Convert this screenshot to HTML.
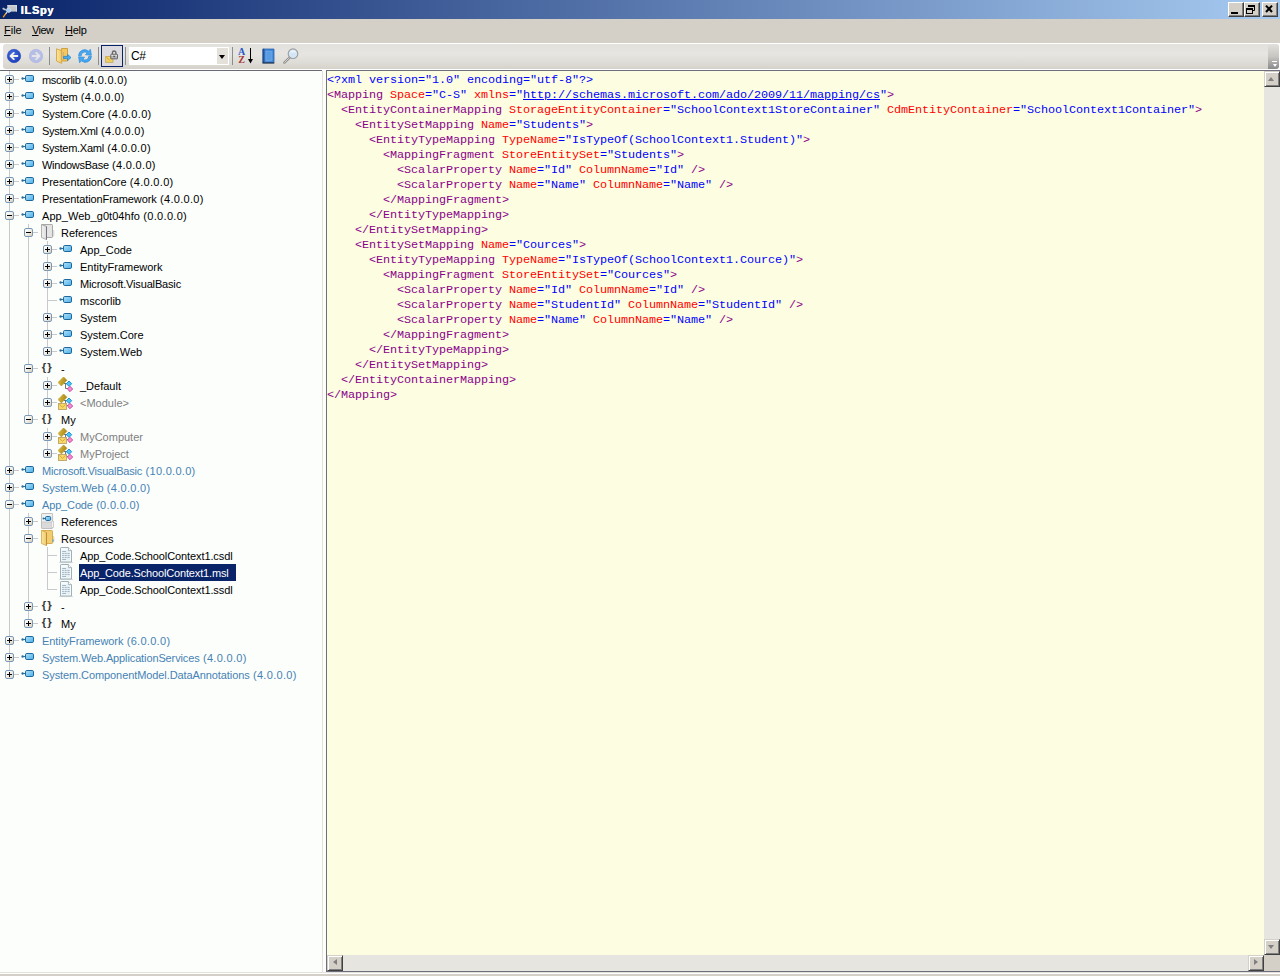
<!DOCTYPE html>
<html lang="en"><head><meta charset="utf-8"><title>ILSpy</title>
<style>
html,body{margin:0;padding:0;}
body{width:1280px;height:976px;overflow:hidden;background:#d4d0c8;position:relative;font-family:"Liberation Sans",sans-serif;font-size:11px;color:#000;}
#title{position:absolute;left:0;top:0;width:1280px;height:19px;background:linear-gradient(90deg,#0a246a 0%,#a6caf0 100%);}
#title .cap{position:absolute;left:20.5px;top:3px;color:#fff;font-weight:bold;font-size:11px;letter-spacing:0.7px;line-height:14px;text-shadow:0.45px 0 0 #fff;}
.wb{position:absolute;top:2px;width:16px;height:15px;background:#d4d0c8;box-sizing:border-box;border:1px solid;border-color:#fff #404040 #404040 #fff;box-shadow:inset -1px -1px 0 #808080;}
#menu{position:absolute;left:0;top:19px;width:1280px;height:24px;background:#d4d0c8;}
#menu span{position:absolute;top:4px;line-height:14px;font-size:11px;}
#menu u{text-decoration:underline;}
#tray{position:absolute;left:0;top:43px;width:1280px;height:27px;background:#fff;}
#tb{position:absolute;left:3px;top:1px;width:1276px;height:25px;border-radius:3px;background:linear-gradient(180deg,#e3e1dc 0%,#e7e5e1 40%,#dedcd6 75%,#d5d2cb 100%);}
#sepline{position:absolute;left:0;top:70px;width:322px;height:1px;background:#6a6a72;}
#sepgap{position:absolute;left:322px;top:70px;width:4px;height:1px;background:#fff;}
#tree{position:absolute;left:0;top:71px;width:322px;height:901px;background:#fcfefc;}
#split{position:absolute;left:322px;top:71px;width:4px;height:901px;background:#fcfefc;border-left:1px solid #e4e1dc;box-sizing:border-box;}
#code{position:absolute;left:326px;top:70px;width:954px;height:902px;background:#fcfde1;border-left:1px solid #6d6f7c;border-top:1px solid #6d6f7c;border-bottom:1px solid #6d6f7c;box-sizing:border-box;}
#bottom1{position:absolute;left:0;top:972px;width:1280px;height:1px;background:#e4e1dc;}
#bottom2{position:absolute;left:0;top:973px;width:1280px;height:1px;background:#fff;}
.exp{position:absolute;width:9px;height:9px;box-sizing:border-box;border:1px solid #7898b5;border-radius:2px;background:linear-gradient(135deg,#fff 0%,#f2efe8 50%,#d6cfbe 100%);}
.exp .h{position:absolute;left:1px;top:3px;width:5px;height:1px;background:#000;}
.exp .v{position:absolute;left:3px;top:1px;width:1px;height:5px;background:#000;}
.icw{position:absolute;width:16px;height:16px;}
.ic{display:block;}
.tx{position:absolute;height:17px;line-height:17px;font-size:11px;letter-spacing:0px;white-space:pre;}
.sfx{letter-spacing:0.3px;}
.tx.gray{color:#808080;}
.tx.blue{color:#4682b4;}
.tx.sel{background:#0a246a;color:#fff;}
.nsic{font-weight:bold;font-size:11px;line-height:16px;}
.ln{position:relative;height:15px;line-height:15px;white-space:pre;font-family:"Liberation Mono",monospace;font-size:11.8px;letter-spacing:-0.08px;}
.t{color:#8b008b;}
.a{color:#ff0000;}
.v{color:#0000ff;}
.l{text-decoration:underline;}
#codetext{position:absolute;left:0px;top:2px;}
.sbtn{position:absolute;width:16px;height:16px;background:#d4d0c8;box-sizing:border-box;border:1px solid;border-color:#d4d0c8 #404040 #404040 #d4d0c8;box-shadow:inset 1px 1px 0 #fff, inset -1px -1px 0 #808080;}
.track{position:absolute;background:#e7e5e0;}
.tl{position:absolute;background:#c9c9cd;display:block;}
.selbg{position:absolute;background:#0a246a;}
.tx.sel{background:none;color:#fff;}
.appic{position:absolute;left:2px;top:2px;width:16px;height:16px;}
.wb svg{display:block;}
.tbi{position:absolute;width:16px;height:16px;}
.tsep{position:absolute;top:3px;width:1px;height:18px;background:#8d8d8d;}
.tbtn{position:absolute;width:22px;height:22px;box-sizing:border-box;border:1px solid #0a246a;background:#dcdce0;}
.tbtn .tbi{left:2px;top:2px;}
.combo{position:absolute;left:126px;top:3px;width:100px;height:18px;background:#fff;}
.ctext{position:absolute;left:2px;top:2px;font-size:12px;letter-spacing:-0.3px;line-height:14px;}
.cbtn{position:absolute;left:88px;top:1px;width:11px;height:16px;background:#e4e1db;}
.cbtn i{position:absolute;left:2px;top:7px;width:0;height:0;border-left:3.5px solid transparent;border-right:3.5px solid transparent;border-top:4px solid #000;}
.grip{position:absolute;left:1265px;top:0;width:11px;height:25px;border-radius:0 3px 3px 0;background:linear-gradient(180deg,#e2e0db 0%,#c8c6c2 50%,#8a8a8a 100%);}
.grip .g1{position:absolute;left:4px;top:17px;width:5px;height:1px;background:#fff;}
.grip .g2{position:absolute;left:5px;top:20px;width:0;height:0;border-left:2.5px solid transparent;border-right:2.5px solid transparent;border-top:3px solid #fff;}
.ar{position:absolute;width:0;height:0;}
.ar.up{left:3px;top:5px;border-left:3.5px solid transparent;border-right:3.5px solid transparent;border-bottom:4px solid #808080;}
.ar.down{left:3px;top:5px;border-left:3.5px solid transparent;border-right:3.5px solid transparent;border-top:4px solid #808080;}
.ar.left{left:5px;top:3px;border-top:3.5px solid transparent;border-bottom:3.5px solid transparent;border-right:4px solid #808080;}
.ar.right{left:5px;top:3px;border-top:3.5px solid transparent;border-bottom:3.5px solid transparent;border-left:4px solid #808080;}

</style></head>
<body>
<svg width="0" height="0" style="position:absolute">
<defs>
<linearGradient id="gAsm" x1="0" y1="0" x2="1" y2="1"><stop offset="0" stop-color="#b4e2fa"/><stop offset="0.5" stop-color="#7cc8f2"/><stop offset="1" stop-color="#4fb0e6"/></linearGradient>
<linearGradient id="gGold" x1="0" y1="0" x2="1" y2="1"><stop offset="0" stop-color="#d8b83a"/><stop offset="1" stop-color="#a8861a"/></linearGradient>
<linearGradient id="gFoldY" x1="0" y1="0" x2="1" y2="0"><stop offset="0" stop-color="#fae6a4"/><stop offset="1" stop-color="#f0c868"/></linearGradient>
<linearGradient id="gFoldG" x1="0" y1="0" x2="1" y2="0"><stop offset="0" stop-color="#f2f2f2"/><stop offset="1" stop-color="#dcdcdc"/></linearGradient>
<radialGradient id="gBack" cx="0.4" cy="0.35" r="0.7"><stop offset="0" stop-color="#4a6ee0"/><stop offset="1" stop-color="#1c3cb8"/></radialGradient>
<linearGradient id="gBook" x1="0" y1="0" x2="1" y2="0"><stop offset="0" stop-color="#2c66b8"/><stop offset="0.25" stop-color="#4a90dc"/><stop offset="1" stop-color="#3c82d2"/></linearGradient>
<linearGradient id="gRef" x1="0" y1="0" x2="1" y2="1"><stop offset="0" stop-color="#7cc4f4"/><stop offset="1" stop-color="#2a8ae0"/></linearGradient>
<linearGradient id="gExp" x1="0" y1="0" x2="1" y2="1"><stop offset="0" stop-color="#ffffff"/><stop offset="0.5" stop-color="#f4f1ea"/><stop offset="1" stop-color="#d2cab6"/></linearGradient>
</defs></svg>
<div id="title"><span class="appic"><svg class="ic" width="16" height="16" viewBox="0 0 16 16"><rect x="5.3" y="3.2" width="9.6" height="6.4" fill="#c2c6ca"/><rect x="5.3" y="3.2" width="9.6" height="1" fill="#e0e2e4"/><rect x="14" y="3.2" width="0.9" height="6.4" fill="#dcdee0"/><path d="M0.6 6.2 L3.8 8" stroke="#c4c8cc" stroke-width="1.6"/><circle cx="6.6" cy="8.2" r="2.2" fill="#a4d0f6" stroke="#d8e4f0" stroke-width="0.7"/><path d="M4.6 10.6 L3.6 11.8" stroke="#e8e8e8" stroke-width="1.3" stroke-linecap="round"/><path d="M3.6 11.9 L1.4 14.8" stroke="#f0a020" stroke-width="1.4" stroke-linecap="round"/></svg></span><span class="cap">ILSpy</span>
<div class="wb" style="left:1228px"><svg width="14" height="13" viewBox="0 0 14 13"><rect x="2" y="9" width="7" height="2" fill="#000"/></svg></div>
<div class="wb" style="left:1244px"><svg width="14" height="13" viewBox="0 0 14 13"><path d="M3.5 3 V2.5 H9.5 V7.5 H8" fill="none" stroke="#000" stroke-width="1"/><rect x="3" y="2" width="7" height="2" fill="#000"/><rect x="1.5" y="5.5" width="6" height="5" fill="none" stroke="#000"/><rect x="1" y="5" width="7" height="2" fill="#000"/></svg></div>
<div class="wb" style="left:1262px"><svg width="14" height="13" viewBox="0 0 14 13"><path d="M3 2.6 L9 9 M9 2.6 L3 9" stroke="#000" stroke-width="2.1" stroke-linecap="butt"/></svg></div>
</div>
<div id="menu"><span style="left:4px"><u>F</u>ile</span><span style="left:32px;letter-spacing:-0.6px"><u>V</u>iew</span><span style="left:65px;letter-spacing:-0.25px"><u>H</u>elp</span></div>
<div id="tray"><div id="tb">
<span class="tbi" style="left:3px;top:4px"><svg class="ic" width="16" height="16" viewBox="0 0 16 16"><circle cx="8" cy="8" r="6.7" fill="url(#gBack)" stroke="#2848c0" stroke-width="0.6"/><path d="M11.4 8 H5.2 M7.8 4.9 L4.6 8 L7.8 11.1" fill="none" stroke="#f4f4f0" stroke-width="1.9" stroke-linecap="round" stroke-linejoin="round"/></svg></span>
<span class="tbi" style="left:25px;top:4px"><svg class="ic" width="16" height="16" viewBox="0 0 16 16"><circle cx="8" cy="8" r="6.7" fill="#b6bee6" stroke="#aab2de" stroke-width="0.6"/><path d="M4.6 8 H10.8 M8.2 4.9 L11.4 8 L8.2 11.1" fill="none" stroke="#e6e6ea" stroke-width="1.9" stroke-linecap="round" stroke-linejoin="round"/></svg></span>
<i class="tsep" style="left:46px"></i>
<span class="tbi" style="left:53px;top:4px"><svg class="ic" width="16" height="16" viewBox="0 0 16 16"><path d="M5.5 0.5 H11.5 V13 H5.5 Z" fill="#f2c860" stroke="#d0a040"/><rect x="6.6" y="4" width="1.4" height="8" fill="#d4b278"/><path d="M0.5 0.8 L5.6 2.6 V15.4 L0.5 13 Z" fill="url(#gFoldY)" stroke="#d8aa4a" stroke-linejoin="round"/><path d="M7.6 8.4 H11.6 V6.4 L15 9.5 L11.6 12.6 V10.6 H7.6 Z" fill="#44aef2" stroke="#1c7cd0" stroke-width="0.7" stroke-linejoin="round"/></svg></span>
<span class="tbi" style="left:74px;top:4px"><svg class="ic" width="16" height="16" viewBox="0 0 16 16"><path d="M1.6 7.8 A6 6 0 0 1 11.6 3.2 L13.4 1.2 L14.4 7.2 L8.4 6.8 L10.1 4.9 A3.6 3.6 0 0 0 4.2 7.8 Z" fill="#46a8f0" stroke="#2484d8" stroke-width="0.6" stroke-linejoin="round"/><path d="M14.4 8.2 A6 6 0 0 1 4.4 12.8 L2.6 14.8 L1.6 8.8 L7.6 9.2 L5.9 11.1 A3.6 3.6 0 0 0 11.8 8.2 Z" fill="#46a8f0" stroke="#2484d8" stroke-width="0.6" stroke-linejoin="round"/></svg></span>
<i class="tsep" style="left:95px"></i>
<span class="tbtn" style="left:98px;top:1px"><span class="tbi" style="left:2px;top:2px"><svg class="ic" width="16" height="16" viewBox="0 0 16 16"><rect x="1.7" y="8.5" width="7.2" height="5.8" fill="#f2d264" stroke="#c8aa58" stroke-width="0.9"/><path d="M2.4 9.2 L5.3 12 L8.2 9.2" fill="none" stroke="#c8a444" stroke-width="0.9"/><path d="M8.4 6.4 V4.8 A1.75 1.75 0 0 1 11.9 4.8 V6.4" fill="none" stroke="#6a6a6a" stroke-width="1.4"/><rect x="6.8" y="6.3" width="6.7" height="4.6" rx="0.6" fill="#b4b4b4" stroke="#5e5e5e" stroke-width="0.9"/><rect x="7.4" y="6.9" width="5.5" height="1" fill="#e8e8e8"/><path d="M8.8 7.8 H11.5 L10.15 9.4 Z" fill="#4a4a4a"/></svg></span></span>
<i class="tsep" style="left:122px"></i>
<span class="combo"><span class="ctext">C#</span><span class="cbtn"><i></i></span></span>
<i class="tsep" style="left:229px"></i>
<span class="tbi" style="left:235px;top:4px"><svg class="ic" width="16" height="16" viewBox="0 0 16 16"><text x="0" y="7" font-family="Liberation Serif, serif" font-weight="bold" font-size="10" fill="#2458c8">A</text><text x="0.3" y="15.4" font-family="Liberation Serif, serif" font-weight="bold" font-size="10" fill="#a83838">Z</text><path d="M12.5 0 V13" stroke="#000" stroke-width="1"/><path d="M10 11 H15 L12.5 15.5 Z" fill="#000"/></svg></span>
<span class="tbi" style="left:258px;top:4px"><svg class="ic" width="16" height="16" viewBox="0 0 16 16"><path d="M2 1 H13 V14.5 H2 Z" fill="url(#gBook)" stroke="#2a62b4" stroke-width="0.8"/><rect x="1.5" y="0.8" width="1.8" height="14.2" fill="#24508c"/><rect x="5" y="3.5" width="6" height="9" fill="#5a9ce4" stroke="#78b0ec" stroke-width="0.6"/><path d="M1.5 15 H13.3" stroke="#1c2c48" stroke-width="1.2"/></svg></span>
<span class="tbi" style="left:280px;top:4px"><svg class="ic" width="16" height="16" viewBox="0 0 16 16"><path d="M7.4 8.8 L1.4 14.6" stroke="#8c8c8c" stroke-width="2.4" stroke-linecap="round"/><path d="M7.4 8.8 L1.6 14.4" stroke="#d8d8d8" stroke-width="1" stroke-linecap="round"/><circle cx="10" cy="5.7" r="4.8" fill="#d4e6f6" stroke="#9c9c9c" stroke-width="1.1"/><path d="M6.6 4.4 A3.8 3.8 0 0 1 13.4 4.4 Z" fill="#eaf3fb"/></svg></span>
<span class="grip"><i class="g1"></i><i class="g2"></i></span>
</div></div>
<div id="sepline"></div><div id="sepgap"></div>
<div id="tree"></div>
<div id="split"></div>
<i class="tl" style="left:9px;top:71px;width:1px;height:604px"></i>
<i class="tl" style="left:28px;top:224px;width:1px;height:196px"></i>
<i class="tl" style="left:47px;top:241px;width:1px;height:111px"></i>
<i class="tl" style="left:47px;top:377px;width:1px;height:26px"></i>
<i class="tl" style="left:47px;top:428px;width:1px;height:26px"></i>
<i class="tl" style="left:28px;top:513px;width:1px;height:111px"></i>
<i class="tl" style="left:47px;top:547px;width:1px;height:43px"></i>
<i class="tl" style="left:14px;top:79px;width:5px;height:1px"></i>
<i class="tl" style="left:14px;top:96px;width:5px;height:1px"></i>
<i class="tl" style="left:14px;top:113px;width:5px;height:1px"></i>
<i class="tl" style="left:14px;top:130px;width:5px;height:1px"></i>
<i class="tl" style="left:14px;top:147px;width:5px;height:1px"></i>
<i class="tl" style="left:14px;top:164px;width:5px;height:1px"></i>
<i class="tl" style="left:14px;top:181px;width:5px;height:1px"></i>
<i class="tl" style="left:14px;top:198px;width:5px;height:1px"></i>
<i class="tl" style="left:14px;top:215px;width:5px;height:1px"></i>
<i class="tl" style="left:33px;top:232px;width:5px;height:1px"></i>
<i class="tl" style="left:52px;top:249px;width:5px;height:1px"></i>
<i class="tl" style="left:52px;top:266px;width:5px;height:1px"></i>
<i class="tl" style="left:52px;top:283px;width:5px;height:1px"></i>
<i class="tl" style="left:48px;top:300px;width:9px;height:1px"></i>
<i class="tl" style="left:52px;top:317px;width:5px;height:1px"></i>
<i class="tl" style="left:52px;top:334px;width:5px;height:1px"></i>
<i class="tl" style="left:52px;top:351px;width:5px;height:1px"></i>
<i class="tl" style="left:33px;top:368px;width:5px;height:1px"></i>
<i class="tl" style="left:52px;top:385px;width:5px;height:1px"></i>
<i class="tl" style="left:52px;top:402px;width:5px;height:1px"></i>
<i class="tl" style="left:33px;top:419px;width:5px;height:1px"></i>
<i class="tl" style="left:52px;top:436px;width:5px;height:1px"></i>
<i class="tl" style="left:52px;top:453px;width:5px;height:1px"></i>
<i class="tl" style="left:14px;top:470px;width:5px;height:1px"></i>
<i class="tl" style="left:14px;top:487px;width:5px;height:1px"></i>
<i class="tl" style="left:14px;top:504px;width:5px;height:1px"></i>
<i class="tl" style="left:33px;top:521px;width:5px;height:1px"></i>
<i class="tl" style="left:33px;top:538px;width:5px;height:1px"></i>
<i class="tl" style="left:48px;top:555px;width:9px;height:1px"></i>
<i class="tl" style="left:48px;top:572px;width:9px;height:1px"></i>
<i class="tl" style="left:48px;top:589px;width:9px;height:1px"></i>
<i class="tl" style="left:33px;top:606px;width:5px;height:1px"></i>
<i class="tl" style="left:33px;top:623px;width:5px;height:1px"></i>
<i class="tl" style="left:14px;top:640px;width:5px;height:1px"></i>
<i class="tl" style="left:14px;top:657px;width:5px;height:1px"></i>
<i class="tl" style="left:14px;top:674px;width:5px;height:1px"></i>
<span class="exp" style="left:5px;top:75px"><i class="h"></i><i class="v"></i></span><span class="icw" style="left:21px;top:72px"><svg class="ic" width="16" height="16" viewBox="0 0 16 16"><circle cx="1.6" cy="6.5" r="1.2" fill="#2b6f9e"/><rect x="2" y="6" width="3" height="1" fill="#2b6f9e"/><rect x="4.5" y="3.5" width="8" height="6" rx="1.3" fill="url(#gAsm)" stroke="#1d679a"/></svg></span><span class="tx " style="left:42px;top:72px;letter-spacing:-0.3px">mscorlib<span class="sfx"> (4.0.0.0)</span></span>
<span class="exp" style="left:5px;top:92px"><i class="h"></i><i class="v"></i></span><span class="icw" style="left:21px;top:89px"><svg class="ic" width="16" height="16" viewBox="0 0 16 16"><circle cx="1.6" cy="6.5" r="1.2" fill="#2b6f9e"/><rect x="2" y="6" width="3" height="1" fill="#2b6f9e"/><rect x="4.5" y="3.5" width="8" height="6" rx="1.3" fill="url(#gAsm)" stroke="#1d679a"/></svg></span><span class="tx " style="left:42px;top:89px;letter-spacing:-0.2px">System<span class="sfx"> (4.0.0.0)</span></span>
<span class="exp" style="left:5px;top:109px"><i class="h"></i><i class="v"></i></span><span class="icw" style="left:21px;top:106px"><svg class="ic" width="16" height="16" viewBox="0 0 16 16"><circle cx="1.6" cy="6.5" r="1.2" fill="#2b6f9e"/><rect x="2" y="6" width="3" height="1" fill="#2b6f9e"/><rect x="4.5" y="3.5" width="8" height="6" rx="1.3" fill="url(#gAsm)" stroke="#1d679a"/></svg></span><span class="tx " style="left:42px;top:106px;letter-spacing:-0.1px">System.Core<span class="sfx"> (4.0.0.0)</span></span>
<span class="exp" style="left:5px;top:126px"><i class="h"></i><i class="v"></i></span><span class="icw" style="left:21px;top:123px"><svg class="ic" width="16" height="16" viewBox="0 0 16 16"><circle cx="1.6" cy="6.5" r="1.2" fill="#2b6f9e"/><rect x="2" y="6" width="3" height="1" fill="#2b6f9e"/><rect x="4.5" y="3.5" width="8" height="6" rx="1.3" fill="url(#gAsm)" stroke="#1d679a"/></svg></span><span class="tx " style="left:42px;top:123px;letter-spacing:-0.3px">System.Xml<span class="sfx"> (4.0.0.0)</span></span>
<span class="exp" style="left:5px;top:143px"><i class="h"></i><i class="v"></i></span><span class="icw" style="left:21px;top:140px"><svg class="ic" width="16" height="16" viewBox="0 0 16 16"><circle cx="1.6" cy="6.5" r="1.2" fill="#2b6f9e"/><rect x="2" y="6" width="3" height="1" fill="#2b6f9e"/><rect x="4.5" y="3.5" width="8" height="6" rx="1.3" fill="url(#gAsm)" stroke="#1d679a"/></svg></span><span class="tx " style="left:42px;top:140px;letter-spacing:-0.27px">System.Xaml<span class="sfx"> (4.0.0.0)</span></span>
<span class="exp" style="left:5px;top:160px"><i class="h"></i><i class="v"></i></span><span class="icw" style="left:21px;top:157px"><svg class="ic" width="16" height="16" viewBox="0 0 16 16"><circle cx="1.6" cy="6.5" r="1.2" fill="#2b6f9e"/><rect x="2" y="6" width="3" height="1" fill="#2b6f9e"/><rect x="4.5" y="3.5" width="8" height="6" rx="1.3" fill="url(#gAsm)" stroke="#1d679a"/></svg></span><span class="tx " style="left:42px;top:157px;letter-spacing:-0.27px">WindowsBase<span class="sfx"> (4.0.0.0)</span></span>
<span class="exp" style="left:5px;top:177px"><i class="h"></i><i class="v"></i></span><span class="icw" style="left:21px;top:174px"><svg class="ic" width="16" height="16" viewBox="0 0 16 16"><circle cx="1.6" cy="6.5" r="1.2" fill="#2b6f9e"/><rect x="2" y="6" width="3" height="1" fill="#2b6f9e"/><rect x="4.5" y="3.5" width="8" height="6" rx="1.3" fill="url(#gAsm)" stroke="#1d679a"/></svg></span><span class="tx " style="left:42px;top:174px;letter-spacing:-0.07px">PresentationCore<span class="sfx"> (4.0.0.0)</span></span>
<span class="exp" style="left:5px;top:194px"><i class="h"></i><i class="v"></i></span><span class="icw" style="left:21px;top:191px"><svg class="ic" width="16" height="16" viewBox="0 0 16 16"><circle cx="1.6" cy="6.5" r="1.2" fill="#2b6f9e"/><rect x="2" y="6" width="3" height="1" fill="#2b6f9e"/><rect x="4.5" y="3.5" width="8" height="6" rx="1.3" fill="url(#gAsm)" stroke="#1d679a"/></svg></span><span class="tx " style="left:42px;top:191px;letter-spacing:-0.1px">PresentationFramework<span class="sfx"> (4.0.0.0)</span></span>
<span class="exp" style="left:5px;top:211px"><i class="h"></i></span><span class="icw" style="left:21px;top:208px"><svg class="ic" width="16" height="16" viewBox="0 0 16 16"><circle cx="1.6" cy="6.5" r="1.2" fill="#2b6f9e"/><rect x="2" y="6" width="3" height="1" fill="#2b6f9e"/><rect x="4.5" y="3.5" width="8" height="6" rx="1.3" fill="url(#gAsm)" stroke="#1d679a"/></svg></span><span class="tx " style="left:42px;top:208px;letter-spacing:0.06px">App_Web_g0t04hfo<span class="sfx"> (0.0.0.0)</span></span>
<span class="exp" style="left:24px;top:228px"><i class="h"></i></span><span class="icw" style="left:41px;top:224px"><svg class="ic" width="16" height="17" viewBox="0 0 16 17"><path d="M11 6.4 H12.2 Q12.8 6.4 12.8 7 V11.4 Q12.8 12 12.2 12 H11 Z" fill="#ffffff" stroke="#b4b4b4" stroke-width="0.6"/><path d="M1 0.5 H10.8 Q11.5 0.5 11.5 1.2 V12.8 Q11.5 13.5 10.8 13.5 H5 V2.4 L0.5 0.6 Z" fill="#e4e4e4" stroke="#a0a0a0" stroke-width="0.9" stroke-linejoin="round"/><path d="M0.5 0.6 L5.5 2.5 V15.6 L0.5 13.5 Z" fill="url(#gFoldG)" stroke="#a8a8a8" stroke-width="0.9" stroke-linejoin="round"/><path d="M5.5 2.5 V15.6" stroke="#74747c" stroke-width="1"/></svg></span><span class="tx " style="left:61px;top:225px">References</span>
<span class="exp" style="left:43px;top:245px"><i class="h"></i><i class="v"></i></span><span class="icw" style="left:59px;top:242px"><svg class="ic" width="16" height="16" viewBox="0 0 16 16"><circle cx="1.6" cy="6.5" r="1.2" fill="#2b6f9e"/><rect x="2" y="6" width="3" height="1" fill="#2b6f9e"/><rect x="4.5" y="3.5" width="8" height="6" rx="1.3" fill="url(#gAsm)" stroke="#1d679a"/></svg></span><span class="tx " style="left:80px;top:242px">App_Code</span>
<span class="exp" style="left:43px;top:262px"><i class="h"></i><i class="v"></i></span><span class="icw" style="left:59px;top:259px"><svg class="ic" width="16" height="16" viewBox="0 0 16 16"><circle cx="1.6" cy="6.5" r="1.2" fill="#2b6f9e"/><rect x="2" y="6" width="3" height="1" fill="#2b6f9e"/><rect x="4.5" y="3.5" width="8" height="6" rx="1.3" fill="url(#gAsm)" stroke="#1d679a"/></svg></span><span class="tx " style="left:80px;top:259px">EntityFramework</span>
<span class="exp" style="left:43px;top:279px"><i class="h"></i><i class="v"></i></span><span class="icw" style="left:59px;top:276px"><svg class="ic" width="16" height="16" viewBox="0 0 16 16"><circle cx="1.6" cy="6.5" r="1.2" fill="#2b6f9e"/><rect x="2" y="6" width="3" height="1" fill="#2b6f9e"/><rect x="4.5" y="3.5" width="8" height="6" rx="1.3" fill="url(#gAsm)" stroke="#1d679a"/></svg></span><span class="tx " style="left:80px;top:276px;letter-spacing:-0.16px">Microsoft.VisualBasic</span>
<span class="icw" style="left:59px;top:293px"><svg class="ic" width="16" height="16" viewBox="0 0 16 16"><circle cx="1.6" cy="6.5" r="1.2" fill="#2b6f9e"/><rect x="2" y="6" width="3" height="1" fill="#2b6f9e"/><rect x="4.5" y="3.5" width="8" height="6" rx="1.3" fill="url(#gAsm)" stroke="#1d679a"/></svg></span><span class="tx " style="left:80px;top:293px">mscorlib</span>
<span class="exp" style="left:43px;top:313px"><i class="h"></i><i class="v"></i></span><span class="icw" style="left:59px;top:310px"><svg class="ic" width="16" height="16" viewBox="0 0 16 16"><circle cx="1.6" cy="6.5" r="1.2" fill="#2b6f9e"/><rect x="2" y="6" width="3" height="1" fill="#2b6f9e"/><rect x="4.5" y="3.5" width="8" height="6" rx="1.3" fill="url(#gAsm)" stroke="#1d679a"/></svg></span><span class="tx " style="left:80px;top:310px">System</span>
<span class="exp" style="left:43px;top:330px"><i class="h"></i><i class="v"></i></span><span class="icw" style="left:59px;top:327px"><svg class="ic" width="16" height="16" viewBox="0 0 16 16"><circle cx="1.6" cy="6.5" r="1.2" fill="#2b6f9e"/><rect x="2" y="6" width="3" height="1" fill="#2b6f9e"/><rect x="4.5" y="3.5" width="8" height="6" rx="1.3" fill="url(#gAsm)" stroke="#1d679a"/></svg></span><span class="tx " style="left:80px;top:327px">System.Core</span>
<span class="exp" style="left:43px;top:347px"><i class="h"></i><i class="v"></i></span><span class="icw" style="left:59px;top:344px"><svg class="ic" width="16" height="16" viewBox="0 0 16 16"><circle cx="1.6" cy="6.5" r="1.2" fill="#2b6f9e"/><rect x="2" y="6" width="3" height="1" fill="#2b6f9e"/><rect x="4.5" y="3.5" width="8" height="6" rx="1.3" fill="url(#gAsm)" stroke="#1d679a"/></svg></span><span class="tx " style="left:80px;top:344px">System.Web</span>
<span class="exp" style="left:24px;top:364px"><i class="h"></i></span><span class="icw" style="left:41px;top:361px"><svg class="ic" width="16" height="16" viewBox="0 0 16 16"><text x="6.3" y="9.6" text-anchor="middle" font-family="Liberation Sans, sans-serif" font-weight="bold" font-size="11.5" fill="#3c3c3c" letter-spacing="1">{}</text></svg></span><span class="tx " style="left:61px;top:361px">-</span>
<span class="exp" style="left:43px;top:381px"><i class="h"></i><i class="v"></i></span><span class="icw" style="left:58px;top:377px"><svg class="ic" width="16" height="17" viewBox="0 0 16 17"><path d="M6 6.5 H9 M7.5 6.5 V11.5 H10" fill="none" stroke="#747474" stroke-width="1"/><rect x="-4" y="-2.4" width="8" height="4.8" transform="translate(4.5 4.4) rotate(-45)" fill="url(#gGold)" stroke="#b09420" stroke-width="0.5"/><rect x="-1.9" y="-1.9" width="3.8" height="3.8" transform="translate(11 6.7) rotate(45)" fill="#4cc4f6" stroke="#1a8ed0" stroke-width="0.9"/><rect x="-1.9" y="-1.9" width="3.8" height="3.8" transform="translate(12 12) rotate(45)" fill="#f68cd0" stroke="#c644a0" stroke-width="0.9"/></svg></span><span class="tx " style="left:80px;top:378px">_Default</span>
<span class="exp" style="left:43px;top:398px"><i class="h"></i><i class="v"></i></span><span class="icw" style="left:58px;top:394px"><svg class="ic" width="16" height="17" viewBox="0 0 16 17"><path d="M6 6.5 H9 M7.5 6.5 V11.5 H10" fill="none" stroke="#747474" stroke-width="1"/><rect x="-4" y="-2.4" width="8" height="4.8" transform="translate(4.5 4.4) rotate(-45)" fill="url(#gGold)" stroke="#b09420" stroke-width="0.5"/><rect x="-1.9" y="-1.9" width="3.8" height="3.8" transform="translate(11 6.7) rotate(45)" fill="#4cc4f6" stroke="#1a8ed0" stroke-width="0.9"/><rect x="-1.9" y="-1.9" width="3.8" height="3.8" transform="translate(12 12) rotate(45)" fill="#f68cd0" stroke="#c644a0" stroke-width="0.9"/><rect x="0.5" y="9.5" width="8" height="6" fill="#f8d866" stroke="#bca468" stroke-width="0.9"/><path d="M1.4 10.3 L4.5 13.3 L7.6 10.3" fill="none" stroke="#d4a838" stroke-width="1"/></svg></span><span class="tx gray" style="left:80px;top:395px">&lt;Module&gt;</span>
<span class="exp" style="left:24px;top:415px"><i class="h"></i></span><span class="icw" style="left:41px;top:412px"><svg class="ic" width="16" height="16" viewBox="0 0 16 16"><text x="6.3" y="9.6" text-anchor="middle" font-family="Liberation Sans, sans-serif" font-weight="bold" font-size="11.5" fill="#3c3c3c" letter-spacing="1">{}</text></svg></span><span class="tx " style="left:61px;top:412px">My</span>
<span class="exp" style="left:43px;top:432px"><i class="h"></i><i class="v"></i></span><span class="icw" style="left:58px;top:428px"><svg class="ic" width="16" height="17" viewBox="0 0 16 17"><path d="M6 6.5 H9 M7.5 6.5 V11.5 H10" fill="none" stroke="#747474" stroke-width="1"/><rect x="-4" y="-2.4" width="8" height="4.8" transform="translate(4.5 4.4) rotate(-45)" fill="url(#gGold)" stroke="#b09420" stroke-width="0.5"/><rect x="-1.9" y="-1.9" width="3.8" height="3.8" transform="translate(11 6.7) rotate(45)" fill="#4cc4f6" stroke="#1a8ed0" stroke-width="0.9"/><rect x="-1.9" y="-1.9" width="3.8" height="3.8" transform="translate(12 12) rotate(45)" fill="#f68cd0" stroke="#c644a0" stroke-width="0.9"/><rect x="0.5" y="9.5" width="8" height="6" fill="#f8d866" stroke="#bca468" stroke-width="0.9"/><path d="M1.4 10.3 L4.5 13.3 L7.6 10.3" fill="none" stroke="#d4a838" stroke-width="1"/></svg></span><span class="tx gray" style="left:80px;top:429px">MyComputer</span>
<span class="exp" style="left:43px;top:449px"><i class="h"></i><i class="v"></i></span><span class="icw" style="left:58px;top:445px"><svg class="ic" width="16" height="17" viewBox="0 0 16 17"><path d="M6 6.5 H9 M7.5 6.5 V11.5 H10" fill="none" stroke="#747474" stroke-width="1"/><rect x="-4" y="-2.4" width="8" height="4.8" transform="translate(4.5 4.4) rotate(-45)" fill="url(#gGold)" stroke="#b09420" stroke-width="0.5"/><rect x="-1.9" y="-1.9" width="3.8" height="3.8" transform="translate(11 6.7) rotate(45)" fill="#4cc4f6" stroke="#1a8ed0" stroke-width="0.9"/><rect x="-1.9" y="-1.9" width="3.8" height="3.8" transform="translate(12 12) rotate(45)" fill="#f68cd0" stroke="#c644a0" stroke-width="0.9"/><rect x="0.5" y="9.5" width="8" height="6" fill="#f8d866" stroke="#bca468" stroke-width="0.9"/><path d="M1.4 10.3 L4.5 13.3 L7.6 10.3" fill="none" stroke="#d4a838" stroke-width="1"/></svg></span><span class="tx gray" style="left:80px;top:446px">MyProject</span>
<span class="exp" style="left:5px;top:466px"><i class="h"></i><i class="v"></i></span><span class="icw" style="left:21px;top:463px"><svg class="ic" width="16" height="16" viewBox="0 0 16 16"><circle cx="1.6" cy="6.5" r="1.2" fill="#2b6f9e"/><rect x="2" y="6" width="3" height="1" fill="#2b6f9e"/><rect x="4.5" y="3.5" width="8" height="6" rx="1.3" fill="url(#gAsm)" stroke="#1d679a"/></svg></span><span class="tx blue" style="left:42px;top:463px;letter-spacing:-0.2px">Microsoft.VisualBasic<span class="sfx"> (10.0.0.0)</span></span>
<span class="exp" style="left:5px;top:483px"><i class="h"></i><i class="v"></i></span><span class="icw" style="left:21px;top:480px"><svg class="ic" width="16" height="16" viewBox="0 0 16 16"><circle cx="1.6" cy="6.5" r="1.2" fill="#2b6f9e"/><rect x="2" y="6" width="3" height="1" fill="#2b6f9e"/><rect x="4.5" y="3.5" width="8" height="6" rx="1.3" fill="url(#gAsm)" stroke="#1d679a"/></svg></span><span class="tx blue" style="left:42px;top:480px;letter-spacing:-0.07px">System.Web<span class="sfx"> (4.0.0.0)</span></span>
<span class="exp" style="left:5px;top:500px"><i class="h"></i></span><span class="icw" style="left:21px;top:497px"><svg class="ic" width="16" height="16" viewBox="0 0 16 16"><circle cx="1.6" cy="6.5" r="1.2" fill="#2b6f9e"/><rect x="2" y="6" width="3" height="1" fill="#2b6f9e"/><rect x="4.5" y="3.5" width="8" height="6" rx="1.3" fill="url(#gAsm)" stroke="#1d679a"/></svg></span><span class="tx blue" style="left:42px;top:497px;letter-spacing:-0.15px">App_Code<span class="sfx"> (0.0.0.0)</span></span>
<span class="exp" style="left:24px;top:517px"><i class="h"></i><i class="v"></i></span><span class="icw" style="left:41px;top:513px"><svg class="ic" width="16" height="17" viewBox="0 0 16 17"><path d="M10.8 8.2 H12 Q12.5 8.2 12.5 8.7 V14 Q12.5 14.5 12 14.5 H10.8 Z" fill="#ffffff" stroke="#b0b0b0" stroke-width="0.6"/><path d="M0.5 1.1 Q0.5 0.5 1.1 0.5 H11 Q11.6 0.5 11.6 1.1 V14.9 Q11.6 15.5 11 15.5 H1.1 Q0.5 15.5 0.5 14.9 Z" fill="#f0f0f0" stroke="#b0b0b0" stroke-width="0.8"/><rect x="1" y="9" width="10" height="6" fill="#dadada"/><path d="M1 9 H11" stroke="#c4c4c4" stroke-width="0.8"/><path d="M10.8 8.2 H12 Q12.5 8.2 12.5 8.7 V14 Q12.5 14.5 12 14.5 H10.8 Z" fill="#ffffff" stroke="#b4b4b4" stroke-width="0.5"/><circle cx="2.5" cy="5.5" r="1" fill="#2b6f9e"/><rect x="3" y="5" width="2" height="1" fill="#2b6f9e"/><rect x="4.5" y="3.5" width="5.2" height="4" rx="1.2" fill="url(#gAsm)" stroke="#1d679a"/></svg></span><span class="tx " style="left:61px;top:514px">References</span>
<span class="exp" style="left:24px;top:534px"><i class="h"></i></span><span class="icw" style="left:41px;top:530px"><svg class="ic" width="16" height="17" viewBox="0 0 16 17"><path d="M11 6.4 H12.2 Q12.8 6.4 12.8 7 V11.4 Q12.8 12 12.2 12 H11 Z" fill="#fffbe8" stroke="#d0aa60" stroke-width="0.6"/><path d="M1 0.5 H10.8 Q11.5 0.5 11.5 1.2 V12.8 Q11.5 13.5 10.8 13.5 H5 V2.4 L0.5 0.6 Z" fill="#f2cd70" stroke="#d4a448" stroke-width="0.9" stroke-linejoin="round"/><rect x="11.6" y="9.4" width="1" height="2.2" fill="#38a4f0"/><path d="M0.5 0.6 L5.5 2.5 V15.6 L0.5 13.5 Z" fill="url(#gFoldY)" stroke="#dcae54" stroke-width="0.9" stroke-linejoin="round"/><path d="M5.5 2.5 V15.6" stroke="#c08e34" stroke-width="1"/></svg></span><span class="tx " style="left:61px;top:531px">Resources</span>
<span class="icw" style="left:59px;top:547px"><svg class="ic" width="16" height="17" viewBox="0 0 16 17"><path d="M0 15.6 H14" stroke="#dcdcdc" stroke-width="1"/><path d="M1.5 1.2 Q1.5 0.5 2.2 0.5 H9.4 L12.5 3.6 V15 H1.5 Z" fill="#f8fbfb" stroke="#9eb0b8" stroke-width="1"/><rect x="2.8" y="3.4" width="8.2" height="10.2" fill="#e6f0f2"/><path d="M9.4 0.5 V3.6 H12.5" fill="#ffffff" stroke="#9eb0b8" stroke-width="0.9"/><rect x="3.2" y="4" width="3.8" height="1" fill="#a2b6c6"/><rect x="3.2" y="6" width="7.4" height="1" fill="#a2b6c6"/><rect x="3.2" y="8" width="7.4" height="1" fill="#a2b6c6"/><rect x="3.2" y="10" width="7.4" height="1" fill="#a2b6c6"/><rect x="3.2" y="12" width="3.8" height="1" fill="#a2b6c6"/><rect x="4.8" y="6" width="1" height="1" fill="#dce8ee"/><rect x="7.6" y="6" width="1" height="1" fill="#dce8ee"/><rect x="4.8" y="8" width="1" height="1" fill="#dce8ee"/><rect x="7.6" y="8" width="1" height="1" fill="#dce8ee"/><rect x="4.8" y="10" width="1" height="1" fill="#dce8ee"/><rect x="7.6" y="10" width="1" height="1" fill="#dce8ee"/></svg></span><span class="tx " style="left:80px;top:548px;letter-spacing:-0.1px">App_Code.SchoolContext1.csdl</span>
<span class="icw" style="left:59px;top:564px"><svg class="ic" width="16" height="17" viewBox="0 0 16 17"><path d="M0 15.6 H14" stroke="#dcdcdc" stroke-width="1"/><path d="M1.5 1.2 Q1.5 0.5 2.2 0.5 H9.4 L12.5 3.6 V15 H1.5 Z" fill="#f8fbfb" stroke="#9eb0b8" stroke-width="1"/><rect x="2.8" y="3.4" width="8.2" height="10.2" fill="#e6f0f2"/><path d="M9.4 0.5 V3.6 H12.5" fill="#ffffff" stroke="#9eb0b8" stroke-width="0.9"/><rect x="3.2" y="4" width="3.8" height="1" fill="#a2b6c6"/><rect x="3.2" y="6" width="7.4" height="1" fill="#a2b6c6"/><rect x="3.2" y="8" width="7.4" height="1" fill="#a2b6c6"/><rect x="3.2" y="10" width="7.4" height="1" fill="#a2b6c6"/><rect x="3.2" y="12" width="3.8" height="1" fill="#a2b6c6"/><rect x="4.8" y="6" width="1" height="1" fill="#dce8ee"/><rect x="7.6" y="6" width="1" height="1" fill="#dce8ee"/><rect x="4.8" y="8" width="1" height="1" fill="#dce8ee"/><rect x="7.6" y="8" width="1" height="1" fill="#dce8ee"/><rect x="4.8" y="10" width="1" height="1" fill="#dce8ee"/><rect x="7.6" y="10" width="1" height="1" fill="#dce8ee"/></svg></span><span class="selbg" style="left:79px;top:564px;width:157px;height:17px"></span><span class="tx sel" style="left:80px;top:565px;letter-spacing:-0.16px">App_Code.SchoolContext1.msl</span>
<span class="icw" style="left:59px;top:581px"><svg class="ic" width="16" height="17" viewBox="0 0 16 17"><path d="M0 15.6 H14" stroke="#dcdcdc" stroke-width="1"/><path d="M1.5 1.2 Q1.5 0.5 2.2 0.5 H9.4 L12.5 3.6 V15 H1.5 Z" fill="#f8fbfb" stroke="#9eb0b8" stroke-width="1"/><rect x="2.8" y="3.4" width="8.2" height="10.2" fill="#e6f0f2"/><path d="M9.4 0.5 V3.6 H12.5" fill="#ffffff" stroke="#9eb0b8" stroke-width="0.9"/><rect x="3.2" y="4" width="3.8" height="1" fill="#a2b6c6"/><rect x="3.2" y="6" width="7.4" height="1" fill="#a2b6c6"/><rect x="3.2" y="8" width="7.4" height="1" fill="#a2b6c6"/><rect x="3.2" y="10" width="7.4" height="1" fill="#a2b6c6"/><rect x="3.2" y="12" width="3.8" height="1" fill="#a2b6c6"/><rect x="4.8" y="6" width="1" height="1" fill="#dce8ee"/><rect x="7.6" y="6" width="1" height="1" fill="#dce8ee"/><rect x="4.8" y="8" width="1" height="1" fill="#dce8ee"/><rect x="7.6" y="8" width="1" height="1" fill="#dce8ee"/><rect x="4.8" y="10" width="1" height="1" fill="#dce8ee"/><rect x="7.6" y="10" width="1" height="1" fill="#dce8ee"/></svg></span><span class="tx " style="left:80px;top:582px;letter-spacing:-0.1px">App_Code.SchoolContext1.ssdl</span>
<span class="exp" style="left:24px;top:602px"><i class="h"></i><i class="v"></i></span><span class="icw" style="left:41px;top:599px"><svg class="ic" width="16" height="16" viewBox="0 0 16 16"><text x="6.3" y="9.6" text-anchor="middle" font-family="Liberation Sans, sans-serif" font-weight="bold" font-size="11.5" fill="#3c3c3c" letter-spacing="1">{}</text></svg></span><span class="tx " style="left:61px;top:599px">-</span>
<span class="exp" style="left:24px;top:619px"><i class="h"></i><i class="v"></i></span><span class="icw" style="left:41px;top:616px"><svg class="ic" width="16" height="16" viewBox="0 0 16 16"><text x="6.3" y="9.6" text-anchor="middle" font-family="Liberation Sans, sans-serif" font-weight="bold" font-size="11.5" fill="#3c3c3c" letter-spacing="1">{}</text></svg></span><span class="tx " style="left:61px;top:616px">My</span>
<span class="exp" style="left:5px;top:636px"><i class="h"></i><i class="v"></i></span><span class="icw" style="left:21px;top:633px"><svg class="ic" width="16" height="16" viewBox="0 0 16 16"><circle cx="1.6" cy="6.5" r="1.2" fill="#2b6f9e"/><rect x="2" y="6" width="3" height="1" fill="#2b6f9e"/><rect x="4.5" y="3.5" width="8" height="6" rx="1.3" fill="url(#gAsm)" stroke="#1d679a"/></svg></span><span class="tx blue" style="left:42px;top:633px;letter-spacing:-0.08px">EntityFramework<span class="sfx"> (6.0.0.0)</span></span>
<span class="exp" style="left:5px;top:653px"><i class="h"></i><i class="v"></i></span><span class="icw" style="left:21px;top:650px"><svg class="ic" width="16" height="16" viewBox="0 0 16 16"><circle cx="1.6" cy="6.5" r="1.2" fill="#2b6f9e"/><rect x="2" y="6" width="3" height="1" fill="#2b6f9e"/><rect x="4.5" y="3.5" width="8" height="6" rx="1.3" fill="url(#gAsm)" stroke="#1d679a"/></svg></span><span class="tx blue" style="left:42px;top:650px;letter-spacing:-0.12px">System.Web.ApplicationServices<span class="sfx"> (4.0.0.0)</span></span>
<span class="exp" style="left:5px;top:670px"><i class="h"></i><i class="v"></i></span><span class="icw" style="left:21px;top:667px"><svg class="ic" width="16" height="16" viewBox="0 0 16 16"><circle cx="1.6" cy="6.5" r="1.2" fill="#2b6f9e"/><rect x="2" y="6" width="3" height="1" fill="#2b6f9e"/><rect x="4.5" y="3.5" width="8" height="6" rx="1.3" fill="url(#gAsm)" stroke="#1d679a"/></svg></span><span class="tx blue" style="left:42px;top:667px;letter-spacing:-0.09px">System.ComponentModel.DataAnnotations<span class="sfx"> (4.0.0.0)</span></span>
<div id="code"><div id="codetext">
<div class="ln"><span class="v">&lt;?xml version=&quot;1.0&quot; encoding=&quot;utf-8&quot;?&gt;</span></div>
<div class="ln"><span class="t">&lt;Mapping</span> <span class="a">Space</span><span class="v">=&quot;C-S&quot;</span> <span class="a">xmlns</span><span class="v">=&quot;</span><span class="v l">http://schemas.microsoft.com/ado/2009/11/mapping/cs</span><span class="v">&quot;</span><span class="t">&gt;</span></div>
<div class="ln">  <span class="t">&lt;EntityContainerMapping</span> <span class="a">StorageEntityContainer</span><span class="v">=&quot;SchoolContext1StoreContainer&quot;</span> <span class="a">CdmEntityContainer</span><span class="v">=&quot;SchoolContext1Container&quot;</span><span class="t">&gt;</span></div>
<div class="ln">    <span class="t">&lt;EntitySetMapping</span> <span class="a">Name</span><span class="v">=&quot;Students&quot;</span><span class="t">&gt;</span></div>
<div class="ln">      <span class="t">&lt;EntityTypeMapping</span> <span class="a">TypeName</span><span class="v">=&quot;IsTypeOf(SchoolContext1.Student)&quot;</span><span class="t">&gt;</span></div>
<div class="ln">        <span class="t">&lt;MappingFragment</span> <span class="a">StoreEntitySet</span><span class="v">=&quot;Students&quot;</span><span class="t">&gt;</span></div>
<div class="ln">          <span class="t">&lt;ScalarProperty</span> <span class="a">Name</span><span class="v">=&quot;Id&quot;</span> <span class="a">ColumnName</span><span class="v">=&quot;Id&quot;</span><span class="t"> /&gt;</span></div>
<div class="ln">          <span class="t">&lt;ScalarProperty</span> <span class="a">Name</span><span class="v">=&quot;Name&quot;</span> <span class="a">ColumnName</span><span class="v">=&quot;Name&quot;</span><span class="t"> /&gt;</span></div>
<div class="ln">        <span class="t">&lt;/MappingFragment&gt;</span></div>
<div class="ln">      <span class="t">&lt;/EntityTypeMapping&gt;</span></div>
<div class="ln">    <span class="t">&lt;/EntitySetMapping&gt;</span></div>
<div class="ln">    <span class="t">&lt;EntitySetMapping</span> <span class="a">Name</span><span class="v">=&quot;Cources&quot;</span><span class="t">&gt;</span></div>
<div class="ln">      <span class="t">&lt;EntityTypeMapping</span> <span class="a">TypeName</span><span class="v">=&quot;IsTypeOf(SchoolContext1.Cource)&quot;</span><span class="t">&gt;</span></div>
<div class="ln">        <span class="t">&lt;MappingFragment</span> <span class="a">StoreEntitySet</span><span class="v">=&quot;Cources&quot;</span><span class="t">&gt;</span></div>
<div class="ln">          <span class="t">&lt;ScalarProperty</span> <span class="a">Name</span><span class="v">=&quot;Id&quot;</span> <span class="a">ColumnName</span><span class="v">=&quot;Id&quot;</span><span class="t"> /&gt;</span></div>
<div class="ln">          <span class="t">&lt;ScalarProperty</span> <span class="a">Name</span><span class="v">=&quot;StudentId&quot;</span> <span class="a">ColumnName</span><span class="v">=&quot;StudentId&quot;</span><span class="t"> /&gt;</span></div>
<div class="ln">          <span class="t">&lt;ScalarProperty</span> <span class="a">Name</span><span class="v">=&quot;Name&quot;</span> <span class="a">ColumnName</span><span class="v">=&quot;Name&quot;</span><span class="t"> /&gt;</span></div>
<div class="ln">        <span class="t">&lt;/MappingFragment&gt;</span></div>
<div class="ln">      <span class="t">&lt;/EntityTypeMapping&gt;</span></div>
<div class="ln">    <span class="t">&lt;/EntitySetMapping&gt;</span></div>
<div class="ln">  <span class="t">&lt;/EntityContainerMapping&gt;</span></div>
<div class="ln"><span class="t">&lt;/Mapping&gt;</span></div>
</div>
<div class="track" style="left:937px;top:0;width:16px;height:884px"></div>
<div class="sbtn" style="left:937px;top:0"><i class="ar up"></i></div>
<div class="sbtn" style="left:937px;top:868px"><i class="ar down"></i></div>
<div class="track" style="left:0;top:884px;width:937px;height:16px"></div>
<div class="sbtn" style="left:0;top:884px"><i class="ar left"></i></div>
<div class="sbtn" style="left:921px;top:884px"><i class="ar right"></i></div>
<div style="position:absolute;left:937px;top:884px;width:16px;height:16px;background:#d4d0c8"></div>
</div>
<div id="bottom1"></div><div id="bottom2"></div>

</body></html>
